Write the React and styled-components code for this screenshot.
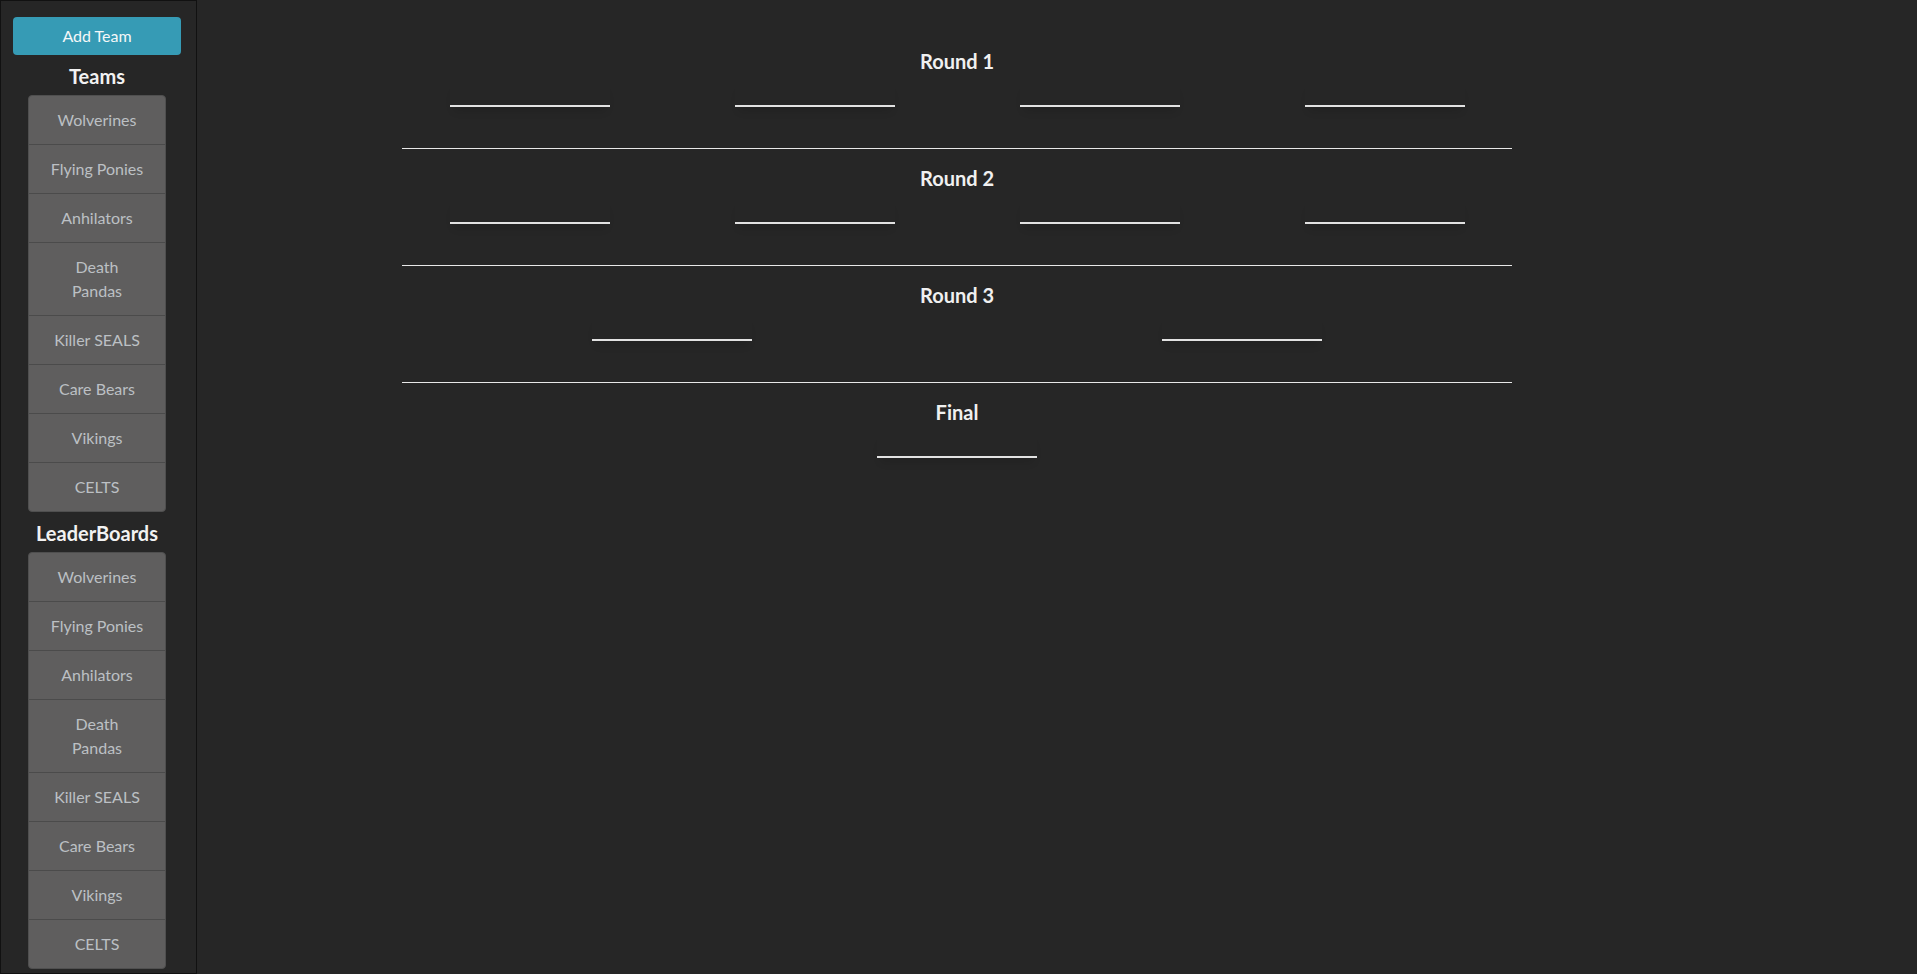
import React from "react";
import styled, { createGlobalStyle } from "styled-components";

const GlobalStyle = createGlobalStyle`
  *, *::before, *::after { box-sizing: border-box; }
  html, body { margin: 0; padding: 0; }
  body {
    background: #262626;
    font-family: Lato, "Open Sans", "Liberation Sans", sans-serif;
    color: #eeeeee;
    overflow: hidden;
  }
`;

const Page = styled.div`
  display: grid;
  grid-template-columns: 1fr 1140px 1fr;
  min-height: 100vh;
  padding-right: 3px;
`;

const Sidebar = styled.aside`
  grid-column: 1;
  grid-row: 1;
  justify-self: start;
  width: 197px;
  height: 100vh;
  border: 1px solid #111111;
  background: #262626;
  padding: 16px 15px 0 12px;
  display: flex;
  flex-direction: column;
  align-items: center;
`;

const AddButton = styled.button`
  width: 168px;
  height: 38px;
  flex-shrink: 0;
  border: none;
  border-radius: 4px;
  background: #369bb5;
  color: #f4f7f8;
  font-family: inherit;
  font-size: 16px;
  line-height: 24px;
  cursor: pointer;
`;

const SideHeading = styled.h5`
  margin: 9px 0 7px;
  font-size: 20px;
  line-height: 24px;
  font-weight: 700;
  color: #f2f2f2;
  text-align: center;
`;

const ListGroup = styled.ul`
  list-style: none;
  margin: 0;
  padding: 0;
  width: 138px;
  border-radius: 4px;
  overflow: hidden;
  border: 1px solid #4f4f4f;
  background: #5f5e5e;
`;

const ListItem = styled.li`
  padding: 12px 20px;
  font-size: 16px;
  line-height: 24px;
  color: #bcc0c4;
  text-align: center;
  & + & {
    border-top: 1px solid #4b4b4b;
  }
`;

const Main = styled.main`
  grid-column: 2;
  grid-row: 1;
  padding: 49px 15px 0;
`;

const Section = styled.section`
  display: flex;
  flex-direction: column;
`;

const RoundTitle = styled.h5`
  margin: 0 0 8px;
  font-size: 20px;
  line-height: 24px;
  font-weight: 700;
  color: #f0f0f0;
  text-align: center;
`;

const MatchRow = styled.div`
  display: grid;
  grid-template-columns: repeat(${(p) => p.$count}, 1fr);
  margin: 0 -15px;
`;

const MatchCell = styled.div`
  display: flex;
  justify-content: center;
`;

const MatchLine = styled.div`
  width: 160px;
  height: 26px;
  border-bottom: 2px solid #e2e2e2;
  box-shadow: 0 8px 8px -4px rgba(0, 0, 0, 0.12);
`;

const Divider = styled.hr`
  margin: 41px 0 17px;
  border: none;
  border-top: 1px solid #e8e8e8;
  height: 0;
`;

const teams = [
  "Wolverines",
  "Flying Ponies",
  "Anhilators",
  "Death Pandas",
  "Killer SEALS",
  "Care Bears",
  "Vikings",
  "CELTS",
];

const rounds = [
  { name: "Round 1", matches: 4 },
  { name: "Round 2", matches: 4 },
  { name: "Round 3", matches: 2 },
  { name: "Final", matches: 1 },
];

export default function App() {
  return (
    <>
      <GlobalStyle />
      <Page>
        <Sidebar>
          <AddButton>Add Team</AddButton>
          <SideHeading>Teams</SideHeading>
          <ListGroup>
            {teams.map((t) => (
              <ListItem key={t}>{t}</ListItem>
            ))}
          </ListGroup>
          <SideHeading>LeaderBoards</SideHeading>
          <ListGroup>
            {teams.map((t) => (
              <ListItem key={t}>{t}</ListItem>
            ))}
          </ListGroup>
        </Sidebar>
        <Main>
          {rounds.map((r, i) => (
            <Section key={r.name}>
              <RoundTitle>{r.name}</RoundTitle>
              <MatchRow $count={r.matches}>
                {Array.from({ length: r.matches }).map((_, j) => (
                  <MatchCell key={j}>
                    <MatchLine />
                  </MatchCell>
                ))}
              </MatchRow>
              {i < rounds.length - 1 && <Divider />}
            </Section>
          ))}
        </Main>
      </Page>
    </>
  );
}
